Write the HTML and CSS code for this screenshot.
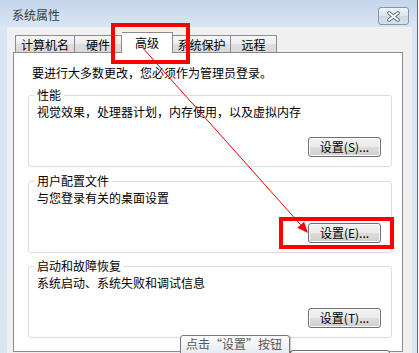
FILE: index.html
```html
<!DOCTYPE html>
<html lang="zh-CN">
<head>
    <meta charset="UTF-8">
    <title>系统属性</title>
    <link rel="stylesheet" href="styles.css">
</head>
<body>
    <div class="window">
        <div class="title-bar">
            <span class="title">系统属性</span>
            <button type="button" class="close-btn">
                <svg width="15" height="11" viewBox="0 0 15 11">
                    <path d="M3 2 L12 9 M12 2 L3 9" stroke="#5d6c82" stroke-width="3.6" stroke-linecap="round"/>
                    <path d="M3 2 L12 9 M12 2 L3 9" stroke="#ffffff" stroke-width="1.8" stroke-linecap="round"/>
                </svg>
            </button>
        </div>

        <div class="client">
            <!-- 选项卡 -->
            <div class="tabs">
                <div class="tab tab-name">计算机名</div>
                <div class="tab tab-hw">硬件</div>
                <div class="tab tab-active">高级</div>
                <div class="tab tab-protect">系统保护</div>
                <div class="tab tab-remote">远程</div>
            </div>

            <div class="panel">
                <p class="intro">要进行大多数更改，您必须作为管理员登录。</p>

                <div class="group">
                    <span class="group-title">性能</span>
                    <p class="group-desc">视觉效果，处理器计划，内存使用，以及虚拟内存</p>
                    <button type="button" class="btn">设置(S)...</button>
                </div>

                <div class="group">
                    <span class="group-title">用户配置文件</span>
                    <p class="group-desc">与您登录有关的桌面设置</p>
                    <button type="button" class="btn">设置(E)...</button>
                </div>

                <div class="group group-last">
                    <span class="group-title">启动和故障恢复</span>
                    <p class="group-desc">系统启动、系统失败和调试信息</p>
                    <button type="button" class="btn">设置(T)...</button>
                </div>

                <!-- 环境变量按钮，只露出顶边 -->
                <button type="button" class="btn env-btn"></button>
            </div>
        </div>
    </div>

    <!-- 标注：红框和箭头 -->
    <svg class="annotation" width="419" height="353" viewBox="0 0 419 353">
        <rect x="113" y="25" width="75" height="37" fill="none" stroke="#ff0000" stroke-width="4"/>
        <rect x="281" y="219" width="111" height="28" fill="none" stroke="#ff0000" stroke-width="4"/>
        <line x1="141.7" y1="46.7" x2="300.7" y2="224.8" stroke="#ee0000" stroke-width="1"/>
        <polygon points="308,233 297.3,227.8 304.1,221.8" fill="#ff0000"/>
    </svg>

    <div class="tooltip">点击“设置”按钮</div>
</body>
</html>
```

FILE: styles.css
```css
* {
    margin: 0;
    padding: 0;
    box-sizing: border-box;
    font-family: "Noto Sans CJK SC", sans-serif;
}

body {
    width: 419px;
    height: 353px;
    overflow: hidden;
    position: relative;
    background-color: #ffffff;
    font-size: 12px;
    line-height: 14px;
    color: #000;
}

.window {
    width: 418px;
    height: 353px;
    border-right: 1px solid #5f6b7c;
    background: linear-gradient(#c4d6ec, #d9e5f3 27px, #dbe6f3);
    display: flex;
    flex-direction: column;
}

.title-bar {
    height: 27px;
    flex-shrink: 0;
    display: flex;
    align-items: flex-start;
    padding: 0 8px 0 12px;
}

.title {
    flex: 1;
    margin-top: 8px;
    color: #3a3a3a;
}

.close-btn {
    margin-top: 7px;
    width: 31px;
    height: 18px;
    border: 1px solid #8595ab;
    border-radius: 3px;
    background: linear-gradient(#eef3f9, #dbe4ef 50%, #cdd8e6 51%, #d6e0ec);
    display: flex;
    align-items: center;
    justify-content: center;
}

.client {
    flex: 1;
    margin: 0 5px 0 7px;
    padding: 5px 0 0 6px;
    background-color: #f0f0f0;
    overflow: hidden;
}

/* 选项卡 */
.tabs {
    height: 20px;
    margin-left: 2px;
    display: flex;
    align-items: flex-end;
}

.tab {
    height: 17px;
    padding-top: 2px;
    border: 1px solid #898c95;
    border-bottom: none;
    text-align: center;
    background: linear-gradient(#f6f6f6, #ececec 50%, #dedede 51%, #d9d9d9);
}

.tab-name { width: 60px; }
.tab-hw { width: 47px; border-left: none; }
.tab-protect { width: 58px; border-left: none; }
.tab-remote { width: 46px; border-left: none; }

.tab-active {
    width: 51px;
    height: 21px;
    margin-bottom: -1px;
    padding-top: 3px;
    background: #ffffff;
    border-left: none;
    position: relative;
    z-index: 1;
}

.panel {
    width: 390px;
    height: 300px;
    padding: 13px 0 0 14px;
    background-color: #ffffff;
    border: 1px solid #898c95;
}

.intro {
    margin-left: 4px;
    margin-bottom: 15px;
}

/* 分组框 */
.group {
    width: 364px;
    height: 72px;
    margin-bottom: 14px;
    padding: 0 10px 9px 8px;
    border: 1px solid #d5dfe5;
    border-radius: 3px;
    display: flex;
    flex-direction: column;
}

.group-last {
    margin-bottom: 12px;
}

.group + .group-last {
    margin-top: -1px;
}

.group-title {
    align-self: flex-start;
    margin: -8px 0 0 -3px;
    padding: 0 3px;
    background-color: #ffffff;
}

.group-desc {
    margin-top: 3px;
}

.btn {
    margin-top: auto;
    align-self: flex-end;
    width: 73px;
    height: 20px;
    border: 1px solid #707070;
    border-radius: 3px;
    background: linear-gradient(#f2f2f2, #ebebeb 50%, #dddddd 51%, #cfcfcf);
    box-shadow: inset 0 0 0 1px #fbfbfb;
    font-size: 12px;
    line-height: 16px;
    color: #000;
}

.env-btn {
    display: block;
    width: 100px;
    margin: 0 12px 0 auto;
}

.annotation {
    position: absolute;
    left: 0;
    top: 0;
    pointer-events: none;
    z-index: 5;
}

.tooltip {
    position: absolute;
    left: 180px;
    top: 335px;
    width: 110px;
    height: 22px;
    padding: 1px 0 0 5px;
    border: 1px solid #767676;
    border-radius: 3px;
    background: linear-gradient(#ffffff, #e4e5f0);
    box-shadow: 1px 1px 2px rgba(0, 0, 0, 0.25);
    color: #575757;
    z-index: 6;
}
```
